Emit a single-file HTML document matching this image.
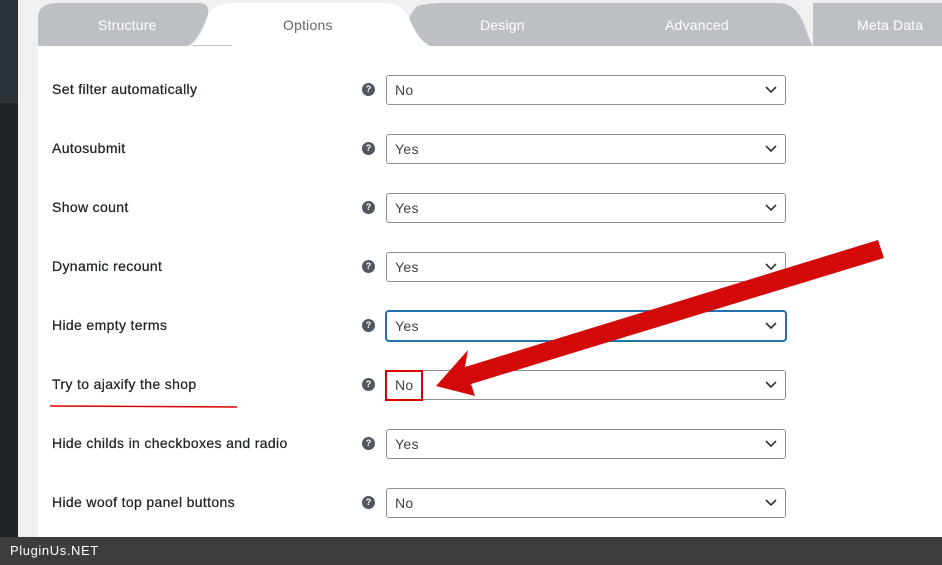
<!DOCTYPE html><html><head><style>
body{margin:0;width:942px;height:565px;position:relative;overflow:hidden;background:#f0f0f1;font-family:"Liberation Sans",sans-serif}
.side{position:absolute;left:0;top:0;width:18px;height:537px;background:#1d2327}
.side2{position:absolute;left:0;top:0;width:18px;height:103px;background:#2c3338}
.main{position:absolute;left:38px;top:46px;width:904px;height:491px;background:#fff}
.tab{position:absolute;color:#fff;font-size:14px;top:17px;letter-spacing:.2px}
.row{position:absolute;left:52px;font-size:14px;color:#1d2327;letter-spacing:.35px;-webkit-text-stroke:.25px #1d2327}
.q{position:absolute;left:362px;width:13px;height:13px;border-radius:50%;background:#50575e;color:#fff;font-size:9px;font-weight:bold;text-align:center;line-height:13px}
.sel{position:absolute;left:386px;width:398px;height:28px;border:1px solid #8c8f94;border-radius:3px;background:#fff;font-size:14px;color:#3c434a;line-height:28px;text-indent:8px;letter-spacing:.3px}
.sel svg{position:absolute;right:8px;top:10px}
.foot{position:absolute;left:0;top:537px;width:942px;height:28px;background:#3d3d3d;color:#fff;font-size:13px;line-height:28px;text-indent:10px;letter-spacing:.6px}
</style></head><body>
<div class="side"></div><div class="side2"></div>
<div class="main"></div>
<svg width="904" height="46" style="position:absolute;left:38px;top:0">
<rect x="0" y="0" width="904" height="46" fill="#f0f0f1"/>
<path d="M0,46 V18 Q0,3 20,3 H160 Q175,3 168,20 Q160,40 150,46 Z" fill="#bcc0c4"/>
<path d="M360,46 Q372,10 380,6 Q390,3 400,3 H740 Q760,3 768,30 Q772,42 775,46 Z" fill="#bcc0c4"/>
<rect x="775" y="3" width="129" height="43" fill="#bcc0c4"/>
<path d="M155,46 Q165,35 170,15 Q175,3 195,3 H345 Q365,3 372,20 Q380,40 392,46 Z" fill="#fff"/>
<line x1="155" y1="45.5" x2="194" y2="45.5" stroke="#bcc0c4"/>
</svg>
<div class="tab" style="left:98px">Structure</div>
<div class="tab" style="left:283px;color:#666">Options</div>
<div class="tab" style="left:480px">Design</div>
<div class="tab" style="left:665px">Advanced</div>
<div class="tab" style="left:857px">Meta Data</div>

<div class="row" style="top:81px">Set filter automatically</div><div class="q" style="top:83px">?</div><div class="sel" style="top:75px">No<svg width="12" height="8"><path d="M1 1l5 5 5-5" stroke="#333" stroke-width="1.6" fill="none"/></svg></div>
<div class="row" style="top:140px">Autosubmit</div><div class="q" style="top:142px">?</div><div class="sel" style="top:134px">Yes<svg width="12" height="8"><path d="M1 1l5 5 5-5" stroke="#333" stroke-width="1.6" fill="none"/></svg></div>
<div class="row" style="top:199px">Show count</div><div class="q" style="top:201px">?</div><div class="sel" style="top:193px">Yes<svg width="12" height="8"><path d="M1 1l5 5 5-5" stroke="#333" stroke-width="1.6" fill="none"/></svg></div>
<div class="row" style="top:258px">Dynamic recount</div><div class="q" style="top:260px">?</div><div class="sel" style="top:252px">Yes<svg width="12" height="8"><path d="M1 1l5 5 5-5" stroke="#333" stroke-width="1.6" fill="none"/></svg></div>
<div class="row" style="top:317px">Hide empty terms</div><div class="q" style="top:319px">?</div><div class="sel" style="top:311px;border-color:#2271b1;box-shadow:0 0 0 1px #2271b1">Yes<svg width="12" height="8"><path d="M1 1l5 5 5-5" stroke="#333" stroke-width="1.6" fill="none"/></svg></div>
<div class="row" style="top:376px">Try to ajaxify the shop</div><div class="q" style="top:378px">?</div><div class="sel" style="top:370px">No<svg width="12" height="8"><path d="M1 1l5 5 5-5" stroke="#333" stroke-width="1.6" fill="none"/></svg></div>
<div class="row" style="top:435px">Hide childs in checkboxes and radio</div><div class="q" style="top:437px">?</div><div class="sel" style="top:429px">Yes<svg width="12" height="8"><path d="M1 1l5 5 5-5" stroke="#333" stroke-width="1.6" fill="none"/></svg></div>
<div class="row" style="top:494px">Hide woof top panel buttons</div><div class="q" style="top:496px">?</div><div class="sel" style="top:488px">No<svg width="12" height="8"><path d="M1 1l5 5 5-5" stroke="#333" stroke-width="1.6" fill="none"/></svg></div>

<svg width="942" height="565" style="position:absolute;left:0;top:0">
<rect x="386" y="371" width="36" height="29" fill="none" stroke="#d00" stroke-width="2"/>
<line x1="50" y1="406" x2="237" y2="407" stroke="#d00" stroke-width="1.5"/>
<polygon points="436,386 468,350 465,367 878,240 884,258 471,384 475,396" fill="#d40a0a"/>
</svg>
<div class="foot">PluginUs.NET</div>
</body></html>
